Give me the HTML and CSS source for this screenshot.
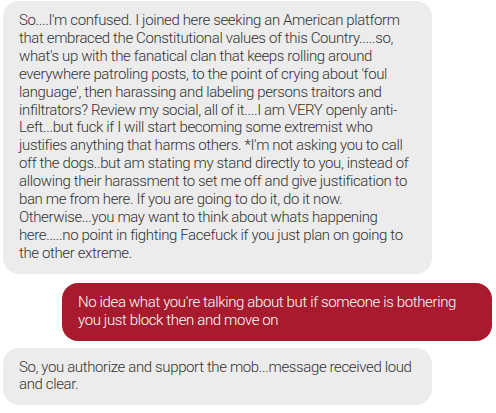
FILE: index.html
```html
<!DOCTYPE html>
<html>
<head>
<meta charset="utf-8">
<link rel="stylesheet" href="styles.css">
</head>
<body>
<div class="thread">
  <div class="bubble in first">So....I'm confused. I joined here seeking an American platform that embraced the Constitutional values of this Country.....so, what's up with the fanatical clan that keeps rolling around everywhere patroling posts, to the point of crying about 'foul language', then harassing and labeling persons traitors and infiltrators? Review my social, all of it....I am VERY openly anti-Left...but fuck if I will start becoming some extremist who justifies anything that harms others. *I'm not asking you to call off the dogs..but am stating my stand directly to you, instead of allowing their harassment to set me off and give justification to ban me from here. If you are going to do it, do it now. Otherwise...you may want to think about whats happening here.....no point in fighting Facefuck if you just plan on going to the other extreme.</div>
  <div class="bubble out">No idea what you're talking about but if someone is bothering you just block then and move on</div>
  <div class="bubble in last">So, you authorize and support the mob...message received loud and clear.</div>
</div>
</body>
</html>
```

FILE: styles.css
```css
html, body {
  margin: 0;
  padding: 0;
  background: #ffffff;
}

.thread {
  display: flex;
  flex-direction: column;
  padding: 1px 4px 0 3px;
  font-family: Roboto, "Liberation Sans", sans-serif;
  font-size: 15px;
  font-weight: 300;
  letter-spacing: -0.37px;
  line-height: 17.9px;
}

.bubble {
  box-sizing: border-box;
  width: 429px;
  padding: 11px 16px 11px 16px;
  border-radius: 16px;
}

.in {
  align-self: flex-start;
  background: #ececec;
  color: #333333;
}

.out {
  align-self: flex-end;
  width: 430px;
  background: #a81b2e;
  color: #ffffff;
  margin-top: 9px;
}

.last {
  margin-top: 7px;
}
```
